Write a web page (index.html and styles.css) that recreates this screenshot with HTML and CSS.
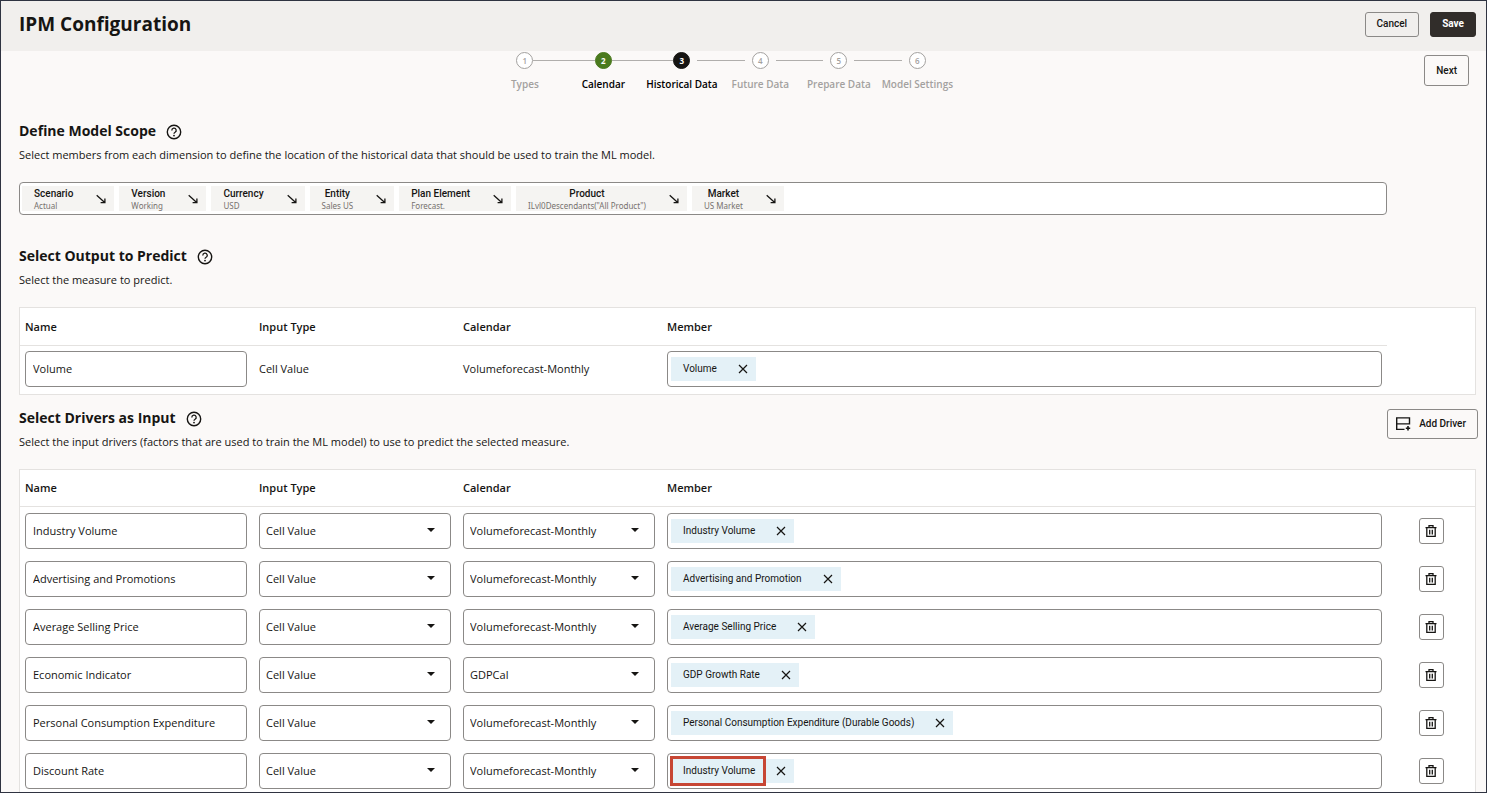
FILE: index.html
```html
<!DOCTYPE html>
<html lang="en">
<head>
    <meta charset="UTF-8">
    <meta name="viewport" content="width=device-width, initial-scale=1.0">
    <title>IPM Configuration</title>
    <link rel="stylesheet" href="styles.css">
</head>
<body>
    <svg class="sprite" aria-hidden="true">
        <symbol id="icon-help" viewBox="0 0 16 16">
            <circle cx="8" cy="8" r="6.7" fill="none" stroke="currentColor" stroke-width="1.4"/>
            <path d="M5.8 6.4a2.2 2.2 0 1 1 3.3 1.9c-.7.4-1.1.7-1.1 1.5" fill="none" stroke="currentColor" stroke-width="1.3"/>
            <circle cx="8" cy="11.6" r=".9" fill="currentColor"/>
        </symbol>
        <symbol id="icon-arrow" viewBox="0 0 10 10">
            <path d="M.7 1.2l8 7.2M8.9 4.4v4.2H4.6" fill="none" stroke="currentColor" stroke-width="1.3"/>
        </symbol>
        <symbol id="icon-close" viewBox="0 0 10 10">
            <path d="M1 1l8 8M9 1L1 9" fill="none" stroke="currentColor" stroke-width="1.2"/>
        </symbol>
        <symbol id="icon-trash" viewBox="0 0 12 12">
            <path d="M.5 2.6h11M4 2.4V.7h4v1.7M1.8 2.8v8.5h8.4V2.8M4.7 4.8v4.6M7.3 4.8v4.6" fill="none" stroke="currentColor" stroke-width="1.3"/>
        </symbol>
        <symbol id="icon-add-row" viewBox="0 0 15 14">
            <path d="M8.5 12.4H.7V.9h12.8v6.6M.7 6.9h12.8" fill="none" stroke="currentColor" stroke-width="1.4"/>
            <path d="M12 9v4.4M9.8 11.2h4.4" fill="none" stroke="currentColor" stroke-width="1.6"/>
        </symbol>
    </svg>

    <div class="page">
        <header class="topbar">
            <h1>IPM Configuration</h1>
            <div class="actions">
                <button type="button" class="btn">Cancel</button>
                <button type="button" class="btn btn-primary">Save</button>
            </div>
        </header>

        <nav class="wizard">
            <ol class="steps">
                <li class="step joined"><span class="track"><span class="dot">1</span></span>Types</li>
                <li class="step done joined"><span class="track"><span class="dot">2</span></span>Calendar</li>
                <li class="step current"><span class="track"><span class="dot">3</span></span>Historical Data</li>
                <li class="step"><span class="track"><span class="dot">4</span></span>Future Data</li>
                <li class="step"><span class="track"><span class="dot">5</span></span>Prepare Data</li>
                <li class="step"><span class="track"><span class="dot">6</span></span>Model Settings</li>
            </ol>
            <button type="button" class="btn btn-next">Next</button>
        </nav>

        <main>
            <section class="scope">
                <div class="heading">
                    <h2>Define Model Scope</h2>
                    <button type="button" class="help" aria-label="Help"><svg><use href="#icon-help"/></svg></button>
                </div>
                <p>Select members from each dimension to define the location of the historical data that should be used to train the ML model.</p>
                <div class="pov">
                    <button type="button" class="dim"><span class="dim-text"><b>Scenario</b><small>Actual</small></span><svg><use href="#icon-arrow"/></svg></button>
                    <button type="button" class="dim"><span class="dim-text"><b>Version</b><small>Working</small></span><svg><use href="#icon-arrow"/></svg></button>
                    <button type="button" class="dim"><span class="dim-text"><b>Currency</b><small>USD</small></span><svg><use href="#icon-arrow"/></svg></button>
                    <button type="button" class="dim centered"><span class="dim-text"><b>Entity</b><small>Sales US</small></span><svg><use href="#icon-arrow"/></svg></button>
                    <button type="button" class="dim"><span class="dim-text"><b>Plan Element</b><small>Forecast.</small></span><svg><use href="#icon-arrow"/></svg></button>
                    <button type="button" class="dim centered"><span class="dim-text"><b>Product</b><small>ILvl0Descendants("All Product")</small></span><svg><use href="#icon-arrow"/></svg></button>
                    <button type="button" class="dim centered"><span class="dim-text"><b>Market</b><small>US Market</small></span><svg><use href="#icon-arrow"/></svg></button>
                </div>
            </section>

            <section class="output">
                <div class="heading">
                    <h2>Select Output to Predict</h2>
                    <button type="button" class="help" aria-label="Help"><svg><use href="#icon-help"/></svg></button>
                </div>
                <p>Select the measure to predict.</p>
                <table class="grid">
                    <colgroup><col class="col-name"><col class="col-pick"><col class="col-pick"><col><col class="col-action"></colgroup>
                    <thead>
                        <tr><th>Name</th><th>Input Type</th><th>Calendar</th><th>Member</th><td></td></tr>
                    </thead>
                    <tbody>
                        <tr>
                            <td><input type="text" value="Volume" aria-label="Name"></td>
                            <td>Cell Value</td>
                            <td>Volumeforecast-Monthly</td>
                            <td><div class="member"><span class="chip"><span class="chip-text">Volume</span><button type="button" aria-label="Remove Volume"><svg><use href="#icon-close"/></svg></button></span></div></td>
                            <td></td>
                        </tr>
                    </tbody>
                </table>
            </section>

            <section class="drivers">
                <div class="section-top">
                    <div>
                        <div class="heading">
                            <h2>Select Drivers as Input</h2>
                            <button type="button" class="help" aria-label="Help"><svg><use href="#icon-help"/></svg></button>
                        </div>
                        <p>Select the input drivers (factors that are used to train the ML model) to use to predict the selected measure.</p>
                    </div>
                    <button type="button" class="btn btn-add"><svg><use href="#icon-add-row"/></svg>Add Driver</button>
                </div>
                <table class="grid">
                    <colgroup><col class="col-name"><col class="col-pick"><col class="col-pick"><col><col class="col-action"></colgroup>
                    <thead>
                        <tr><th>Name</th><th>Input Type</th><th>Calendar</th><th>Member</th><th></th></tr>
                    </thead>
                    <tbody>
                        <tr>
                            <td><input type="text" value="Industry Volume" aria-label="Name"></td>
                            <td><select aria-label="Input Type"><option>Cell Value</option></select></td>
                            <td><select aria-label="Calendar"><option>Volumeforecast-Monthly</option></select></td>
                            <td><div class="member"><span class="chip"><span class="chip-text">Industry Volume</span><button type="button" aria-label="Remove Industry Volume"><svg><use href="#icon-close"/></svg></button></span></div></td>
                            <td><button type="button" class="trash" aria-label="Delete driver"><svg><use href="#icon-trash"/></svg></button></td>
                        </tr>
                        <tr>
                            <td><input type="text" value="Advertising and Promotions" aria-label="Name"></td>
                            <td><select aria-label="Input Type"><option>Cell Value</option></select></td>
                            <td><select aria-label="Calendar"><option>Volumeforecast-Monthly</option></select></td>
                            <td><div class="member"><span class="chip"><span class="chip-text">Advertising and Promotion</span><button type="button" aria-label="Remove Advertising and Promotion"><svg><use href="#icon-close"/></svg></button></span></div></td>
                            <td><button type="button" class="trash" aria-label="Delete driver"><svg><use href="#icon-trash"/></svg></button></td>
                        </tr>
                        <tr>
                            <td><input type="text" value="Average Selling Price" aria-label="Name"></td>
                            <td><select aria-label="Input Type"><option>Cell Value</option></select></td>
                            <td><select aria-label="Calendar"><option>Volumeforecast-Monthly</option></select></td>
                            <td><div class="member"><span class="chip"><span class="chip-text">Average Selling Price</span><button type="button" aria-label="Remove Average Selling Price"><svg><use href="#icon-close"/></svg></button></span></div></td>
                            <td><button type="button" class="trash" aria-label="Delete driver"><svg><use href="#icon-trash"/></svg></button></td>
                        </tr>
                        <tr>
                            <td><input type="text" value="Economic Indicator" aria-label="Name"></td>
                            <td><select aria-label="Input Type"><option>Cell Value</option></select></td>
                            <td><select aria-label="Calendar"><option>GDPCal</option></select></td>
                            <td><div class="member"><span class="chip"><span class="chip-text">GDP Growth Rate</span><button type="button" aria-label="Remove GDP Growth Rate"><svg><use href="#icon-close"/></svg></button></span></div></td>
                            <td><button type="button" class="trash" aria-label="Delete driver"><svg><use href="#icon-trash"/></svg></button></td>
                        </tr>
                        <tr>
                            <td><input type="text" value="Personal Consumption Expenditure" aria-label="Name"></td>
                            <td><select aria-label="Input Type"><option>Cell Value</option></select></td>
                            <td><select aria-label="Calendar"><option>Volumeforecast-Monthly</option></select></td>
                            <td><div class="member"><span class="chip"><span class="chip-text">Personal Consumption Expenditure (Durable Goods)</span><button type="button" aria-label="Remove Personal Consumption Expenditure"><svg><use href="#icon-close"/></svg></button></span></div></td>
                            <td><button type="button" class="trash" aria-label="Delete driver"><svg><use href="#icon-trash"/></svg></button></td>
                        </tr>
                        <tr>
                            <td><input type="text" value="Discount Rate" aria-label="Name"></td>
                            <td><select aria-label="Input Type"><option>Cell Value</option></select></td>
                            <td><select aria-label="Calendar"><option>Volumeforecast-Monthly</option></select></td>
                            <td><div class="member"><span class="chip"><span class="chip-text marked">Industry Volume</span><button type="button" aria-label="Remove Industry Volume"><svg><use href="#icon-close"/></svg></button></span></div></td>
                            <td><button type="button" class="trash" aria-label="Delete driver"><svg><use href="#icon-trash"/></svg></button></td>
                        </tr>
                    </tbody>
                </table>
            </section>
        </main>
    </div>
</body>
</html>
```
FILE: styles.css
```css
* {
    box-sizing: border-box;
}
body {
    margin: 0;
    font-family: "Open Sans", "Noto Sans", sans-serif;
    font-size: 11px;
    line-height: 16px;
    color: #161513;
    background: #fbf9f8;
}
button, input, select {
    font: inherit;
    color: inherit;
    margin: 0;
}
button {
    cursor: pointer;
}
h1, h2, p, ol {
    margin: 0;
    padding: 0;
}
.sprite {
    display: none;
}
.page {
    min-height: 100vh;
    border: 1px solid #2f3341;
}

/* top bar */
.topbar {
    display: flex;
    justify-content: space-between;
    align-items: center;
    height: 50px;
    padding: 0 10px 4px 18px;
    background: #f1efed;
}
h1 {
    font-size: 19px;
    line-height: 28px;
    font-weight: 700;
}
.actions {
    display: flex;
    gap: 11px;
}
.btn {
    height: 25px;
    padding: 0 11px;
    border: 1px solid #8b8987;
    border-radius: 3px;
    background: transparent;
    font-family: Roboto, "Open Sans", sans-serif;
    font-size: 10px;
    font-weight: 500;
}
.btn-primary {
    border-color: #312d2a;
    background: #312d2a;
    color: #fff;
    font-weight: 700;
}

/* wizard steps */
.wizard {
    display: flex;
    align-items: flex-start;
    padding: 1px 17px 0 17px;
}
.steps {
    display: flex;
    width: 471px;
    margin: 0 auto;
    list-style: none;
}
.step {
    flex: 1;
    text-align: center;
    white-space: nowrap;
    font-size: 10px;
    font-weight: 600;
    color: #a3a19f;
}
.track {
    display: grid;
    grid-template-columns: 1fr 17px 1fr;
    align-items: center;
    margin-bottom: 7px;
}
.track::before, .track::after {
    content: "";
    height: 1px;
    background: #b0aeac;
}
.track::after {
    margin-left: 7px;
}
.track::before {
    margin-right: 7px;
}
.joined .track::after,
.joined + .step .track::before {
    margin: 0;
}
.step:first-child .track::before,
.step:last-child .track::after {
    background: none;
}
.dot {
    width: 17px;
    height: 17px;
    border: 1px solid #a3a19f;
    border-radius: 50%;
    background: #fff;
    font-size: 8px;
    line-height: 15px;
}
.done, .current {
    color: #000;
}
.done .dot {
    border-color: #4a7a1e;
    background: #4a7a1e;
    color: #fff;
    font-weight: 700;
}
.current .dot {
    border-color: #161513;
    background: #161513;
    color: #fff;
    font-weight: 700;
}
.btn-next {
    height: 31px;
    margin-top: 3px;
}

/* sections */
main {
    padding: 29px 10px 0 18px;
}
.heading {
    display: flex;
    align-items: center;
    gap: 10px;
}
h2 {
    font-size: 14px;
    line-height: 20px;
    font-weight: 700;
}
.help {
    display: flex;
    padding: 2px 0 0;
    border: 0;
    background: none;
}
.help svg {
    width: 16px;
    height: 16px;
}
p {
    margin-top: 6px;
}
.pov {
    display: flex;
    gap: 5px;
    margin: 19px 89px 0 0;
    padding: 3px 2px;
    border: 1px solid #8b8987;
    border-radius: 4px;
    background: #fff;
}
.dim {
    display: flex;
    align-items: center;
    gap: 23px;
    height: 25px;
    padding: 0 8px 0 12px;
    border: 0;
    background: #f5f4f2;
    overflow: hidden;
    text-align: left;
}
.dim.centered {
    text-align: center;
}
.dim b, .dim small {
    display: block;
}
.dim b {
    font-family: Roboto, "Open Sans", sans-serif;
    font-size: 10px;
    line-height: 15px;
    font-weight: 500;
}
.dim small {
    font-family: "Noto Sans", sans-serif;
    font-size: 8px;
    line-height: 10px;
    color: #75716e;
}
.dim svg {
    width: 10px;
    height: 10px;
}

/* tables */
.output {
    padding-top: 31px;
}
.grid {
    width: 100%;
    table-layout: fixed;
    border-spacing: 0;
    border: 1px solid #e4e2e0;
    background: #fff;
}
.output .grid, .drivers .grid {
    margin-top: 19px;
}
.col-name {
    width: 233px;
}
.col-pick {
    width: 204px;
}
.col-action {
    width: 88px;
}
.grid th, .grid td {
    padding: 6px;
    text-align: left;
}
.grid th:first-child, .grid td:first-child {
    padding-left: 5px;
}
.grid th:nth-child(4), .grid td:nth-child(4) {
    padding-right: 5px;
}
.grid th {
    height: 37px;
    padding-top: 0;
    padding-bottom: 0;
    font-weight: 600;
    border-bottom: 1px solid #e4e2e0;
}
.output .grid th {
    height: 38px;
}
.output .grid tbody td {
    padding-top: 5px;
    padding-bottom: 7px;
}
.grid input, .grid select, .member {
    display: block;
    width: 100%;
    height: 36px;
    border: 1px solid #8b8987;
    border-radius: 4px;
    background: #fff;
}
.grid input {
    padding: 0 7px 2px;
}
.grid select {
    padding: 0 6px;
    appearance: none;
    background: #fff url("data:image/svg+xml,%3Csvg xmlns='http://www.w3.org/2000/svg' viewBox='0 0 8 4'%3E%3Cpath d='M0 0h8L4 4z' fill='%23161513'/%3E%3C/svg%3E") no-repeat right 15px top 14px / 8px 4px;
}
.member {
    display: flex;
    align-items: center;
    padding: 0 3px;
}
.chip {
    display: flex;
    height: 24px;
    background: #e4f1f7;
    font-family: Roboto, "Open Sans", sans-serif;
    font-size: 10px;
    line-height: 23px;
}
.chip-text {
    padding: 0 11px 0 12px;
}
.chip button {
    display: flex;
    align-items: center;
    padding: 0 8px 0 10px;
    border: 0;
    background: none;
}
.chip svg {
    width: 10px;
    height: 10px;
}
/* red callout over the member name */
.marked {
    position: relative;
}
.marked::after {
    content: "";
    position: absolute;
    inset: -3px 0 -3px -1px;
    border: 3px solid #c74634;
}
.trash {
    display: flex;
    align-items: center;
    justify-content: center;
    width: 25px;
    height: 26px;
    margin: 0 auto;
    padding: 0;
    border: 1px solid #8b8987;
    border-radius: 3px;
    background: #fff;
}
.trash svg {
    width: 12px;
    height: 12px;
}

/* drivers */
.section-top {
    display: flex;
    justify-content: space-between;
    align-items: flex-start;
    margin-right: -2px;
    padding-top: 13px;
}
.drivers .grid {
    border-bottom: 0;
}
.drivers tbody tr:last-child td {
    padding-bottom: 3px;
}
.btn-add {
    display: flex;
    align-items: center;
    gap: 8px;
    height: 30px;
    margin-top: 1px;
    padding: 0 11px 0 8px;
}
.btn-add svg {
    width: 15px;
    height: 14px;
}
```
